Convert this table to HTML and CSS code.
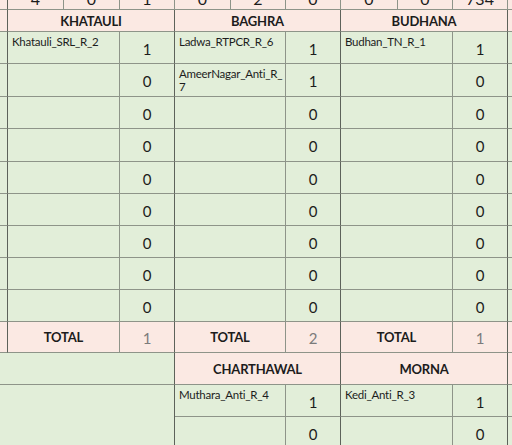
FILE: index.html
```html
<!DOCTYPE html>
<html>
<head>
<meta charset="utf-8">
<link rel="stylesheet" href="styles.css">
</head>
<body>
<div class="sheet">
  <!-- row 0: totals strip (mostly scrolled out) -->
  <div class="c pink edge"></div>
  <div class="c pink top">4</div>
  <div class="c pink top">0</div>
  <div class="c pink top">1</div>
  <div class="c pink top">0</div>
  <div class="c pink top">2</div>
  <div class="c pink top">0</div>
  <div class="c pink top">0</div>
  <div class="c pink top">0</div>
  <div class="c pink top">734</div>
  <div class="c pink right"></div>

  <!-- row 1: block headers -->
  <div class="c pink edge"></div>
  <div class="c pink hd s3">KHATAULI</div>
  <div class="c pink hd s3">BAGHRA</div>
  <div class="c pink hd s3">BUDHANA</div>
  <div class="c pink right"></div>

  <!-- data rows -->
  <div class="c green edge"></div>
  <div class="c green nm s2">Khatauli_SRL_R_2</div><div class="c green v">1</div>
  <div class="c green nm s2">Ladwa_RTPCR_R_6</div><div class="c green v">1</div>
  <div class="c green nm s2">Budhan_TN_R_1</div><div class="c green v">1</div>
  <div class="c green right nm">Kairana_Anti_R_5</div>

  <div class="c green edge"></div>
  <div class="c green nm s2"></div><div class="c green v">0</div>
  <div class="c green nm s2 wrap">AmeerNagar_Anti_R_7</div><div class="c green v">1</div>
  <div class="c green nm s2"></div><div class="c green v">0</div>
  <div class="c green right"></div>

  <div class="c green edge"></div>
  <div class="c green nm s2"></div><div class="c green v">0</div>
  <div class="c green nm s2"></div><div class="c green v">0</div>
  <div class="c green nm s2"></div><div class="c green v">0</div>
  <div class="c green right"></div>

  <div class="c green edge"></div>
  <div class="c green nm s2"></div><div class="c green v">0</div>
  <div class="c green nm s2"></div><div class="c green v">0</div>
  <div class="c green nm s2"></div><div class="c green v">0</div>
  <div class="c green right"></div>

  <div class="c green edge"></div>
  <div class="c green nm s2"></div><div class="c green v">0</div>
  <div class="c green nm s2"></div><div class="c green v">0</div>
  <div class="c green nm s2"></div><div class="c green v">0</div>
  <div class="c green right"></div>

  <div class="c green edge"></div>
  <div class="c green nm s2"></div><div class="c green v">0</div>
  <div class="c green nm s2"></div><div class="c green v">0</div>
  <div class="c green nm s2"></div><div class="c green v">0</div>
  <div class="c green right"></div>

  <div class="c green edge"></div>
  <div class="c green nm s2"></div><div class="c green v">0</div>
  <div class="c green nm s2"></div><div class="c green v">0</div>
  <div class="c green nm s2"></div><div class="c green v">0</div>
  <div class="c green right"></div>

  <div class="c green edge"></div>
  <div class="c green nm s2"></div><div class="c green v">0</div>
  <div class="c green nm s2"></div><div class="c green v">0</div>
  <div class="c green nm s2"></div><div class="c green v">0</div>
  <div class="c green right"></div>

  <div class="c green edge"></div>
  <div class="c green nm s2"></div><div class="c green v">0</div>
  <div class="c green nm s2"></div><div class="c green v">0</div>
  <div class="c green nm s2"></div><div class="c green v">0</div>
  <div class="c green right"></div>

  <!-- totals -->
  <div class="c pink edge"></div>
  <div class="c pink tot s2">TOTAL</div><div class="c pink v tv">1</div>
  <div class="c pink tot s2">TOTAL</div><div class="c pink v tv">2</div>
  <div class="c pink tot s2">TOTAL</div><div class="c pink v tv">1</div>
  <div class="c pink right"></div>

  <!-- second block headers -->
  <div class="c green blank s4"></div>
  <div class="c pink hd s3">CHARTHAWAL</div>
  <div class="c pink hd s3">MORNA</div>
  <div class="c pink right"></div>

  <div class="c green s4 r2"></div>
  <div class="c green nm s2">Muthara_Anti_R_4</div><div class="c green v">1</div>
  <div class="c green nm s2">Kedi_Anti_R_3</div><div class="c green v">1</div>
  <div class="c green right"></div>

  <div class="c green nm s2"></div><div class="c green v">0</div>
  <div class="c green nm s2"></div><div class="c green v">0</div>
  <div class="c green right"></div>
</div>
</body>
</html>
```

FILE: styles.css
```css
html, body {
  margin: 0;
  padding: 0;
  overflow: hidden;
  background: #e2eed9;
}

.sheet {
  display: grid;
  grid-template-columns: 8px 56px 56px 55px 56px 55px 55px 57px 55px 55px 60px;
  grid-template-rows: 30px 22px 32px 33px 32px 33px 32px 32px 32px 32px 32px 31px 32px 32px 32px;
  margin-top: -20px;
  width: 540px;
  font-family: Lato, "Open Sans", sans-serif;
  color: #1c1c1c;
}

.c {
  box-sizing: border-box;
  border-right: 1px solid #8e9489;
  border-bottom: 1px solid #8e9489;
  overflow: hidden;
  white-space: nowrap;
}

.pink { background: #fbe9e3; }
.green { background: #e2eed9; }

.edge { border-right-color: #5d625a; }
.right { border-right: none; }

.s2 { grid-column: span 2; }
.s3 { grid-column: span 3; border-right-color: #5d625a; }
.s4 { grid-column: span 4; border-right-color: #5d625a; }
.r2 { grid-row: span 2; border-bottom: none; }

.top {
  display: flex;
  align-items: flex-end;
  justify-content: center;
  font-size: 16px;
  line-height: 16px;
  padding-bottom: 2px;
}

.hd {
  display: flex;
  align-items: center;
  justify-content: center;
  font-weight: 700;
  font-size: 13px;
  letter-spacing: -0.2px;
}

.nm {
  font-size: 11.5px;
  letter-spacing: -0.25px;
  line-height: 13px;
  padding: 3px 2px 0 4px;
}

.wrap {
  white-space: normal;
  word-break: break-all;
  padding-right: 2px;
}

.v {
  display: flex;
  align-items: center;
  justify-content: center;
  font-size: 15px;
  padding-top: 2px;
  border-right-color: #5d625a;
}

.tot {
  display: flex;
  align-items: center;
  justify-content: center;
  font-weight: 700;
  font-size: 13px;
  letter-spacing: -0.2px;
}

.tv {
  color: #7b7b7b;
}
```
